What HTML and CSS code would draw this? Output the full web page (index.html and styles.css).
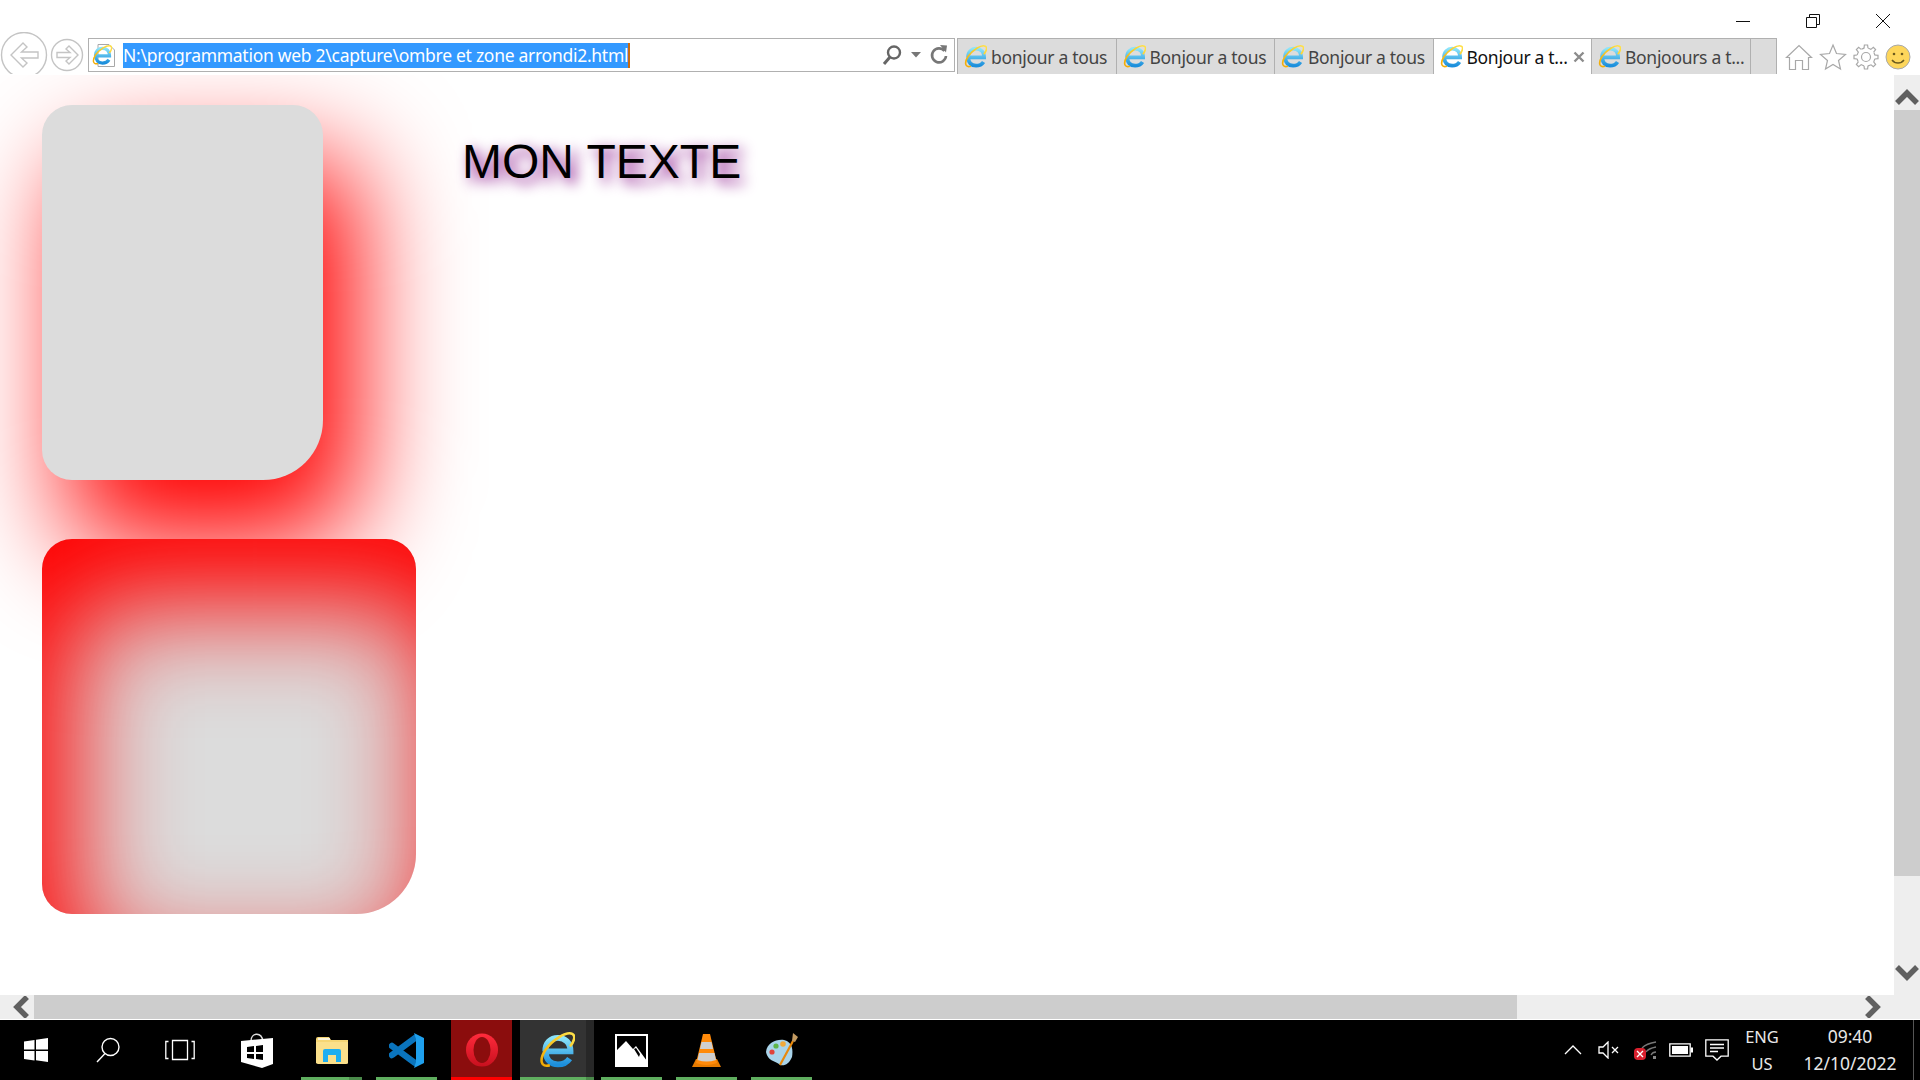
FILE: index.html
```html
<!DOCTYPE html>
<html lang="fr">
<head>
<meta charset="utf-8">
<title>Bonjour a tous</title>
<link rel="stylesheet" href="styles.css">
</head>
<body>
<svg class="defs" aria-hidden="true">
  <defs>
    <linearGradient id="ieBlue" x1="0" y1="0" x2="0" y2="1"><stop offset="0" stop-color="#8be4fa"/><stop offset="1" stop-color="#1c8fdc"/></linearGradient>
    <linearGradient id="ieGold" x1="0" y1="1" x2="1" y2="0"><stop offset="0" stop-color="#f2a900"/><stop offset="1" stop-color="#ffe24a"/></linearGradient>
    <linearGradient id="opRed" x1="0" y1="0" x2="0" y2="1"><stop offset="0" stop-color="#ff2b3c"/><stop offset="1" stop-color="#c8101e"/></linearGradient>
    <symbol id="ie" viewBox="0 0 40 40">
      <path d="M7 21.500C7 12 13 6.500 21 6.500C29 6.500 35 12 35 21.500H7M7.500 21.500C7.500 31 13 36 21 36C27 36 31 34 34 29.500" fill="none" stroke="url(#ieBlue)" stroke-width="6.500"/>
      <path d="M12 37C2 40 0 31 7 20C15 9 30 -1 37 2C41 4 39 11 34.500 16" fill="none" stroke="url(#ieGold)" stroke-width="2.800"/>
    </symbol>
  </defs>
</svg>
<div class="window">
  <header class="titlebar">
    <div class="winbtn"><svg width="16" height="16" viewBox="0 0 16 16"><path d="M1 8.500H15" class="ink"/></svg></div>
    <div class="winbtn"><svg width="16" height="16" viewBox="0 0 16 16"><path d="M1.500 4.500H11.500V14.500H1.500ZM4.500 4.500V1.500H14.500V11.500H11.500" class="ink"/></svg></div>
    <div class="winbtn"><svg width="16" height="16" viewBox="0 0 16 16"><path d="M1 1L15 15M15 1L1 15" class="ink"/></svg></div>
  </header>

  <div class="toolbar">
    <svg class="nav" width="88" height="42" viewBox="0 0 88 42">
      <circle cx="24" cy="23" r="22.500" class="navline"/>
      <path d="M11 23L23 11L27 15L21.500 20H38V26H21.500L27 31L23 35Z" class="navline"/>
      <circle cx="67" cy="23" r="15.500" class="navline"/>
      <path d="M78 23L69 14L66 17L70 20.500H57V25.500H70L66 29L69 32Z" class="navline"/>
    </svg>
    <div class="address">
      <svg class="pageicon" width="24" height="26" viewBox="0 0 24 26">
        <path d="M6 2.500H17L22.500 8V24.500H6Z" fill="#fff" stroke="#a8a8a8"/>
        <use href="#ie" x="0" y="3" width="20" height="20"/>
      </svg>
      <span class="url">N:\programmation web 2\capture\ombre et zone arrondi2.html</span>
      <div class="addr-tools">
        <svg width="22" height="22" viewBox="0 0 22 22"><circle cx="13" cy="8.500" r="6" fill="none" stroke="#666" stroke-width="2.400"/><path d="M9 13L3 20" stroke="#666" stroke-width="3"/></svg>
        <svg width="10" height="6" viewBox="0 0 10 6"><path d="M0 0H10L5 5.500Z" fill="#777"/></svg>
        <svg width="20" height="22" viewBox="0 0 20 22"><path d="M15.500 7A7 7 0 1 0 17 12" fill="none" stroke="#777" stroke-width="2.600"/><path d="M11 1L18 1.500L17 8.500Z" fill="#777"/></svg>
      </div>
    </div>
    <div class="tabs">
      <div class="tab"><svg class="favicon"><use href="#ie"/></svg><span>bonjour a tous</span></div>
      <div class="tab"><svg class="favicon"><use href="#ie"/></svg><span>Bonjour a tous</span></div>
      <div class="tab"><svg class="favicon"><use href="#ie"/></svg><span>Bonjour a tous</span></div>
      <div class="tab active"><svg class="favicon"><use href="#ie"/></svg><span>Bonjour a t...</span><svg class="tabclose" width="12" height="12" viewBox="0 0 12 12"><path d="M1.500 1.500L10.500 10.500M10.500 1.500L1.500 10.500" stroke="#8c8c8c" stroke-width="2.400"/></svg></div>
      <div class="tab"><svg class="favicon"><use href="#ie"/></svg><span>Bonjoours a t...</span></div>
      <div class="newtab"></div>
    </div>
    <div class="tools">
      <svg width="28" height="28" viewBox="0 0 28 28"><path d="M1.500 14.500L14 2.500L26.500 14.500L23.500 14.500V26.500H17.500V17.500H10.500V26.500H4.500V14.500Z" class="toolline"/></svg>
      <svg width="28" height="28" viewBox="0 0 28 28"><path d="M14 2L17.500 10.500L26.500 11.500L19.500 17.500L21.500 26L14 21.500L6.500 26L8.500 17.500L1.500 11.500L10.500 10.500Z" class="toolline"/></svg>
      <svg width="26" height="26" viewBox="0 0 26 26">
        <circle cx="13" cy="13" r="4.500" class="toolline"/>
        <circle cx="13" cy="13" r="9" class="toolline" stroke-dasharray="3.070 4" stroke-dashoffset="-2"/>
        <g class="toolline">
          <path id="tooth" d="M11 4.200L11.400 1H14.600L15 4.200"/>
          <use href="#tooth" transform="rotate(45 13 13)"/><use href="#tooth" transform="rotate(90 13 13)"/><use href="#tooth" transform="rotate(135 13 13)"/>
          <use href="#tooth" transform="rotate(180 13 13)"/><use href="#tooth" transform="rotate(225 13 13)"/><use href="#tooth" transform="rotate(270 13 13)"/><use href="#tooth" transform="rotate(315 13 13)"/>
        </g>
      </svg>
      <svg width="26" height="26" viewBox="0 0 26 26"><circle cx="13" cy="13" r="12" fill="#fdd65b" stroke="#a9a9a9"/><circle cx="9" cy="10" r="1.300" fill="#6b5a1e"/><circle cx="17" cy="10" r="1.300" fill="#6b5a1e"/><path d="M7 16C10 20 16 20 19 16" fill="none" stroke="#6b5a1e" stroke-width="1.400"/></svg>
    </div>
  </div>

  <div class="viewport">
    <main class="page">
      <div class="boxes">
        <div class="box box-outer"></div>
        <div class="box box-inner"></div>
      </div>
      <h1 class="headline">MON TEXTE</h1>
    </main>
    <aside class="vscroll">
      <div class="sbtn sup"><svg width="24" height="16" viewBox="0 0 24 16"><path d="M2 14L12 4L22 14" class="arrow"/></svg></div>
      <div class="vtrack"><div class="vthumb"></div></div>
      <div class="sbtn sdown"><svg width="24" height="16" viewBox="0 0 24 16"><path d="M2 2L12 12L22 2" class="arrow"/></svg></div>
    </aside>
  </div>

  <div class="hscroll">
    <div class="hbtn hleft"><svg width="16" height="22" viewBox="0 0 16 22"><path d="M14 1L4 11L14 21" class="arrow"/></svg></div>
    <div class="hthumb"></div>
    <div class="hbtn hright"><svg width="16" height="22" viewBox="0 0 16 22"><path d="M2 1L12 11L2 21" class="arrow"/></svg></div>
  </div>

  <footer class="taskbar">
    <div class="slot sys"><svg width="24" height="24" viewBox="0 0 24 24"><path d="M0 3.500L10.500 2V11.500H0ZM12 1.800L24 0V11.500H12ZM0 13H10.500V22.500L0 21ZM12 13H24V24L12 22.300Z" fill="#fff"/></svg></div>
    <div class="slot sys"><svg width="26" height="26" viewBox="0 0 26 26"><circle cx="15.500" cy="10" r="8.500" fill="none" stroke="#fff" stroke-width="1.400"/><path d="M10 16.500L2 25" stroke="#fff" stroke-width="1.400"/></svg></div>
    <div class="slot sys"><svg width="30" height="22" viewBox="0 0 30 22"><path d="M7.500 1.500H22.500V20.500H7.500ZM3.500 2.500H.8V19.500H3.500M26.500 2.500H29.200V19.500H26.500" fill="none" stroke="#fff" stroke-width="1.300"/></svg></div>
    <div class="slot-gap"></div>
    <div class="slot"><svg width="32" height="36" viewBox="0 0 32 36"><path d="M10 9C10 1 20 -1 22 9" fill="none" stroke="#ddd" stroke-width="1.500"/><path d="M0 9L32 6V32L21 36L0 30Z" fill="#fff"/><path d="M6 15L13 14V20H6ZM15 14L22 13V20H15ZM6 22H13V27L6 26ZM15 22H22V28L15 27Z" fill="#000"/></svg></div>
    <div class="slot run stacked"><svg width="32" height="28" viewBox="0 0 32 28"><path d="M0 3Q0 1 2 1H13L15 4H32V27H0Z" fill="#f6d674"/><path d="M0 6H32V27Q32 28 30 28H2Q0 28 0 26Z" fill="#fbe08b"/><path d="M2 3H14" stroke="#fff" stroke-width="1.500"/><path d="M7 26V15Q7 13 9 13H23Q25 13 25 15V26H20V19H12V26Z" fill="#1eaef0"/></svg></div>
    <div class="slot run"><svg width="36" height="37" viewBox="0 0 36 37"><path d="M26 6L3 23M3 14L26 31" stroke="#0a74bd" stroke-width="6.500" stroke-linecap="round" fill="none"/><path d="M25 1L35 6V31L25 36L27 30V7Z" fill="#1fa0ee"/></svg></div>
    <div class="slot run opera"><svg width="34" height="36" viewBox="0 0 34 36"><ellipse cx="17" cy="18" rx="16" ry="16.500" fill="url(#opRed)"/><ellipse cx="17" cy="18" rx="8.500" ry="13" fill="#8b0d0d"/></svg></div>
    <div class="slot run current"><svg width="36" height="36"><use href="#ie"/></svg></div>
    <div class="slot run"><svg width="33" height="33" viewBox="0 0 33 33"><path d="M1 1H32V32H1Z" fill="none" stroke="#fff" stroke-width="2"/><path d="M1 17L11 7L18 15L21 12L32 27V32H1Z" fill="#fff"/><path d="M19 15L21 14L25 20L24 23Z" fill="#000"/></svg></div>
    <div class="slot run"><svg width="31" height="35" viewBox="0 0 31 35"><path d="M1 34L5 26H26L30 34Z" fill="#e77b00"/><path d="M5 30L12 1H19L26 30Q15.500 34 5 30Z" fill="#ff8a0a"/><path d="M10.500 9H20.500L22 16H9ZM8 20H23.500L25 27Q15.500 30 6.500 27Z" fill="#cfcfcf"/></svg></div>
    <div class="slot run"><svg width="36" height="36" viewBox="0 0 36 36"><path d="M2 20C3 11 12 7 20 8C29 10 29 19 28 25C25 32 21 34 16 33C13 29 4 30 2 20Z" fill="#a9d4ea"/><circle cx="8" cy="20" r="2.600" fill="#e0433a"/><circle cx="12" cy="14" r="2.600" fill="#5fb548"/><circle cx="19" cy="12" r="2.800" fill="#f1a93a"/><path d="M16 33L29 9" stroke="#e8890c" stroke-width="2.200"/><path d="M28 9L29 1L34 5L31 10Z" fill="#c49b62"/></svg></div>
    <div class="tray">
      <div class="trayicon"><svg width="18" height="10" viewBox="0 0 18 10"><path d="M1 9L9 1L17 9" class="trayline"/></svg></div>
      <div class="trayicon"><svg width="22" height="18" viewBox="0 0 22 18"><path d="M1 6H5L10 1V17L5 12H1Z" class="trayline"/><path d="M14 6L20 12M20 6L14 12" class="trayline"/></svg></div>
      <div class="trayicon"><svg width="24" height="20" viewBox="0 0 24 20"><path d="M9 8C12 5 17 3 23 2M13 12C15 9 18 8 23 7M18 15C19 13 21 12 23 12" fill="none" stroke="#777" stroke-width="1.300"/><rect x="20" y="16" width="3" height="3" fill="#888"/><rect x="1" y="8" width="12" height="12" rx="4" fill="#d9202e"/><path d="M4 11L10 17M10 11L4 17" stroke="#fff" stroke-width="1.400"/></svg></div>
      <div class="trayicon"><svg width="24" height="14" viewBox="0 0 24 14"><path d="M.8.800H21.200V13.200H.8Z" class="trayline"/><rect x="3" y="3" width="16" height="8" fill="#fff"/><rect x="22" y="4.500" width="2" height="5" fill="#fff"/></svg></div>
      <div class="trayicon"><svg width="24" height="24" viewBox="0 0 24 24"><path d="M.8 1.800H23.200V18.200H16L12 22L8 18.200H.8Z" class="trayline"/><path d="M5 6.500H19M5 10H19M5 13.500H13" class="trayline"/></svg></div>
      <div class="lang"><span>ENG</span><span>US</span></div>
      <div class="clock"><span>09:40</span><span>12/10/2022</span></div>
      <div class="showdesk"></div>
    </div>
  </footer>
</div>
</body>
</html>
```

FILE: styles.css
```css
* { box-sizing: border-box; }
html, body { margin: 0; height: 100%; overflow: hidden; background: #fff; }
body { font-family: "Noto Sans", "Open Sans", sans-serif; }
.defs { display: block; width: 0; height: 0; }

.window { display: flex; flex-direction: column; height: 1080px; width: 1920px; }

.titlebar { height: 38px; display: flex; justify-content: flex-end; padding: 9px 2px 0 0; flex: none; }
.winbtn { width: 70px; height: 20px; display: flex; align-items: center; justify-content: center; padding-top: 3px; }
.ink { fill: none; stroke: #111; stroke-width: 1; }

.toolbar { height: 37px; display: flex; flex: none; }
.nav { flex: none; margin-top: -6px; display: block; }
.navline { fill: #fff; stroke: #c4c4c4; stroke-width: 1.400; }
.address { width: 867px; height: 34px; border: 1px solid #b0b0b0; display: flex; align-items: center; padding-left: 3px; flex: none; }
.pageicon { flex: none; }
.url { margin: 1px 0 0 7px; height: 25px; line-height: 25px; font-size: 17.500px; letter-spacing: -0.28px; color: #fff; background: #3399ff; border-right: 2px solid #c86a10; white-space: nowrap; }
.addr-tools { margin-left: auto; display: flex; align-items: center; gap: 8px; padding-right: 5px; }

.tabs { display: flex; margin-left: 2px; height: 36px; background: #dcdcdc; border-top: 1px solid #b0b0b0; flex: none; }
.tab { width: 158.500px; display: flex; align-items: center; border-left: 1px solid #b0b0b0; color: #444; font-size: 17.500px; letter-spacing: -0.3px; padding-left: 6px; white-space: nowrap; }
.tab span { margin-left: 4px; }
.tab.active { background: #fff; color: #111; }
.favicon { width: 23px; height: 23px; flex: none; }
.tabclose { margin-left: 5px; flex: none; }
.newtab { width: 27px; border-left: 1px solid #b0b0b0; border-right: 1px solid #b0b0b0; }

.tools { display: flex; align-items: center; gap: 6px; padding-left: 8.500px; }
.toolline { fill: none; stroke: #a8a8a8; stroke-width: 1.200; }

.viewport { flex: 1; display: flex; min-height: 0; }
.page { flex: 1; display: flex; padding: 30px 0 0 42px; overflow: hidden; }
.boxes { display: flex; flex-direction: column; gap: 59px; width: 375px; flex: none; }
.box { height: 375px; background: #dcdcdc; border-radius: 30px 30px 60px 30px; }
.box-outer { width: 281px; box-shadow: 30px 60px 110px 5px #f00; }
.box-inner { width: 374px; box-shadow: inset 24px 60px 110px 8px #f00; position: relative; }
.headline { margin: 29px 0 0 45px; font: 400 48px "Liberation Sans", Arial, sans-serif; color: #000; text-shadow: 5px 5px 14px purple; white-space: nowrap; }

.vscroll { width: 26px; display: flex; flex-direction: column; background: #eee; flex: none; }
.sbtn { height: 35px; display: flex; justify-content: center; flex: none; }
.sup { padding-top: 14px; }
.sdown { height: 44px; padding-top: 14px; }
.vtrack { flex: 1; }
.vthumb { height: 766px; background: #cdcdcd; }
.arrow { fill: none; stroke: #606060; stroke-width: 5.500; }

.hscroll { height: 25px; display: flex; background: #eee; flex: none; border-bottom: 1px solid #fff; }
.hbtn { width: 34px; display: flex; align-items: center; justify-content: center; flex: none; }
.hleft { padding-left: 8px; }
.hthumb { width: 1483px; background: #cdcdcd; }
.hright { margin-left: 339px; }

.taskbar { height: 60px; background: #000; display: flex; flex: none; color: #fff; }
.slot { width: 75px; height: 60px; display: flex; align-items: center; justify-content: center; position: relative; flex: none; }
.slot.sys { width: 72px; }
.slot-gap { width: 3px; }
.slot.run::after { content: ""; position: absolute; left: 7px; right: 7px; bottom: 0; height: 3px; background: #5fae5f; }
.slot.stacked::after { background: linear-gradient(to right, #5fae5f 48px, #4a8a4a 48px); }
.opera { background: linear-gradient(#8b0d0d, #8b0d0d) 7px 0 / 61px 100% no-repeat; }
.slot.opera::after { background: #f00; }
.current { background: linear-gradient(to right, #333 66px, #272727 66px); margin-left: 1px; width: 74px; }
.slot.current::after { left: 0; right: 0; background: linear-gradient(to right, #5fae5f 66px, #4a8a4a 66px); }
.tray { margin-left: auto; display: flex; width: 365px; }
.trayicon { width: 36px; display: flex; align-items: center; justify-content: center; flex: none; }
.trayline { fill: none; stroke: #fff; stroke-width: 1.300; }
.lang { width: 54px; display: flex; flex-direction: column; align-items: center; justify-content: center; gap: 4px; font-size: 16.500px; line-height: 23px; flex: none; color: #e8e8e8; }
.clock { width: 122px; display: flex; flex-direction: column; align-items: center; justify-content: center; gap: 4px; font-size: 17.500px; line-height: 23px; flex: none; color: #e8e8e8; }
.showdesk { margin-left: 2px; width: 1px; background: #555; }
```
